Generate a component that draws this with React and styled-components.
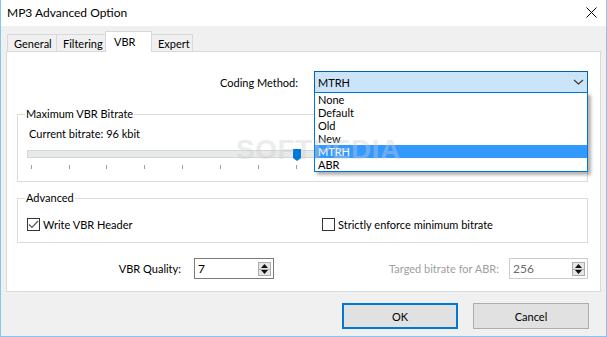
import styled, { createGlobalStyle } from "styled-components"

const GlobalStyle = createGlobalStyle`
  html, body {
    margin: 0;
    padding: 0;
    background: #ffffff;
  }
  * {
    box-sizing: border-box;
  }
`

const Window = styled.div`
  position: relative;
  width: 607px;
  height: 337px;
  display: flex;
  flex-direction: column;
  border: 1px solid #88c4f2;
  border-top: none;
  font-family: "Lato", "Liberation Sans", sans-serif;
  font-size: 11px;
  color: #000;
  overflow: hidden;
`

const TitleBar = styled.div`
  height: 26px;
  flex: none;
  display: flex;
  align-items: center;
  justify-content: space-between;
  padding: 0 9px 1px 6px;
  background: #fff;
`

const Title = styled.span`
  font-size: 12px;
  color: #000;
`

const Body = styled.div`
  flex: 1;
  display: flex;
  flex-direction: column;
  background: #f0f0f0;
  padding: 5px 5px 8px 5px;
`

const TabRow = styled.div`
  display: flex;
  align-items: flex-end;
  padding-left: 1px;
  margin-bottom: -1px;
  height: 21px;
`

const Tab = styled.div`
  position: relative;
  margin-left: -1px;
  width: ${p => p.$w}px;
  display: flex;
  align-items: center;
  border: 1px solid #d9d9d9;
  border-bottom: none;
  background: ${p => (p.$active ? "#fff" : "#f0f0f0")};
  height: ${p => (p.$active ? "21px" : "17px")};
  margin-bottom: ${p => (p.$active ? "0" : "1px")};
  padding: ${p => (p.$active ? "0 0 2px 8px" : "0 0 0 6px")};
  z-index: ${p => (p.$active ? 2 : 1)};
  &:first-child {
    margin-left: 0;
  }
`

const Panel = styled.div`
  position: relative;
  display: flex;
  flex-direction: column;
  background: #fff;
  border: 1px solid #d9d9d9;
  padding: 19px 12px 12px 10px;
`

const CodingRow = styled.div`
  display: flex;
  justify-content: flex-end;
  align-items: center;
  gap: 16px;
`

const Combo = styled.div`
  position: relative;
  width: 274px;
  height: 22px;
  display: flex;
  align-items: center;
  justify-content: space-between;
  padding: 0 3px 0 3px;
  background: #cce4f7;
  border: 1px solid #0063b1;
`

const DropList = styled.div`
  position: absolute;
  left: -1px;
  top: 20px;
  width: 274px;
  background: #fff;
  border: 1px solid #0078d7;
  box-shadow: 3px 3px 3px rgba(0, 0, 0, 0.3);
  z-index: 10;
`

const Option = styled.div`
  height: 13px;
  line-height: 13px;
  padding-left: 3px;
  background: ${p => (p.$selected ? "#3399ff" : "transparent")};
  color: ${p => (p.$selected ? "#fff" : "#000")};
`

const Group = styled.fieldset`
  margin: ${p => p.$mt}px 0 0;
  padding: ${p => p.$pad};
  border: 1px solid #dcdcdc;
  min-width: 0;
`

const Legend = styled.legend`
  margin-left: -2px;
  padding: 0 1px;
  line-height: 16px;
  height: 16px;
`

const BitrateText = styled.div`
  width: fit-content;
  padding-left: 2px;
  line-height: 16px;
`

const Slider = styled.div`
  position: relative;
  margin-top: 7px;
  height: 20px;
`

const Track = styled.div`
  position: absolute;
  left: 0;
  top: 1px;
  width: 539px;
  height: 8px;
  background: #e7eaea;
  border: 1px solid #d6d6d6;
`

const Tick = styled.div`
  position: absolute;
  top: 16px;
  width: 1px;
  height: 4px;
  background: #a0a0a0;
`

const Thumb = styled.svg`
  position: absolute;
  top: 0;
  left: 266px;
`

const CheckGrid = styled.div`
  display: grid;
  grid-template-columns: 295px 1fr;
  height: 16px;
  align-items: center;
`

const CheckLabel = styled.label`
  display: flex;
  align-items: center;
  gap: 3px;
  width: fit-content;
`

const Box = styled.span`
  width: 13px;
  height: 13px;
  border: 1px solid #333;
  background: #fff;
  display: flex;
  align-items: center;
  justify-content: center;
`

const SpinRow = styled.div`
  display: grid;
  grid-template-columns: 257px 1fr;
  margin-top: 15px;
`

const Field = styled.div`
  display: flex;
  justify-content: flex-end;
  align-items: center;
  gap: ${p => p.$gap}px;
  color: ${p => (p.$disabled ? "#a0a0a0" : "#000")};
`

const SpinBox = styled.div`
  width: ${p => p.$w}px;
  height: 21px;
  display: flex;
  align-items: center;
  justify-content: space-between;
  padding: 0 2px 0 3px;
  border: 1px solid ${p => (p.$disabled ? "#cccccc" : "#7a7a7a")};
  background: #fff;
  color: ${p => (p.$disabled ? "#6d6d6d" : "#000")};
  font-size: 12px;
`

const Arrows = styled.div`
  display: flex;
  flex-direction: column;
`

const ArrowBtn = styled.div`
  width: 13px;
  height: 7px;
  border: 1px solid #adadad;
  background: #e5e5e5;
  display: flex;
  align-items: center;
  justify-content: center;
  &:first-child {
    border-bottom: none;
  }
`

const ButtonRow = styled.div`
  display: flex;
  justify-content: flex-end;
  gap: 15px;
  margin-top: 11px;
  padding-right: 12px;
`

const Button = styled.div`
  width: 116px;
  height: 26px;
  display: flex;
  align-items: center;
  justify-content: center;
  background: #e1e1e1;
  border: ${p => (p.$default ? "2px solid #0078d7" : "1px solid #adadad")};
`

const Watermark = styled.div`
  position: absolute;
  left: 229px;
  top: 82px;
  font-family: "Liberation Sans", sans-serif;
  font-weight: bold;
  font-size: 28px;
  letter-spacing: 0.5px;
  color: rgba(205, 205, 205, 0.4);
  pointer-events: none;
  z-index: 20;
`

const options = ["None", "Default", "Old", "New", "MTRH", "ABR"]

function Spin({ value, width, disabled }) {
  return (
    <SpinBox $w={width} $disabled={disabled}>
      <span>{value}</span>
      <Arrows>
        <ArrowBtn>
          <svg width="7" height="4" viewBox="0 0 7 4"><path d="M0 4 L3.5 0 L7 4 Z" fill="#111" /></svg>
        </ArrowBtn>
        <ArrowBtn>
          <svg width="7" height="4" viewBox="0 0 7 4"><path d="M0 0 L3.5 4 L7 0 Z" fill="#111" /></svg>
        </ArrowBtn>
      </Arrows>
    </SpinBox>
  )
}

function Check({ checked, children }) {
  return (
    <CheckLabel>
      <Box>
        {checked && (
          <svg width="11" height="9" viewBox="0 0 11 9">
            <path d="M1 4.5 L4 7.5 L10 1" fill="none" stroke="#555" strokeWidth="1.2" />
          </svg>
        )}
      </Box>
      {children}
    </CheckLabel>
  )
}

export default function App() {
  const ticks = Array.from({ length: 15 }, (_, i) => 3.6 + i * 37.9)

  return (
    <Window>
      <GlobalStyle />
      <TitleBar>
        <Title>MP3 Advanced Option</Title>
        <svg width="11" height="11" viewBox="0 0 11 11">
          <path d="M0.5 0.5 L10.5 10.5 M10.5 0.5 L0.5 10.5" stroke="#000" strokeWidth="1" />
        </svg>
      </TitleBar>
      <Body>
        <TabRow>
          <Tab $w={50}>General</Tab>
          <Tab $w={50}>Filtering</Tab>
          <Tab $w={47} $active>VBR</Tab>
          <Tab $w={42}>Expert</Tab>
        </TabRow>
        <Panel>
          <CodingRow>
            <span>Coding Method:</span>
            <Combo>
              <span>MTRH</span>
              <svg width="11" height="6" viewBox="0 0 11 6">
                <path d="M1 1 L5.5 5 L10 1" fill="none" stroke="#333" strokeWidth="1.1" />
              </svg>
              <DropList>
                {options.map(o => (
                  <Option key={o} $selected={o === "MTRH"}>{o}</Option>
                ))}
              </DropList>
            </Combo>
          </CodingRow>

          <Group $mt={13} $pad="4px 10px 12px 9px">
            <Legend>Maximum VBR Bitrate</Legend>
            <BitrateText>Current bitrate: 96 kbit</BitrateText>
            <Slider>
              <Track />
              {ticks.map((x, i) => (
                <Tick key={i} style={{ left: Math.round(x) }} />
              ))}
              <Thumb width="8" height="12" viewBox="0 0 8 12">
                <path d="M0 0 H8 V9 L4 12 L0 9 Z" fill="#0078d7" />
              </Thumb>
            </Slider>
          </Group>

          <Group $mt={8} $pad="10px 10px 10px 9px">
            <Legend>Advanced</Legend>
            <CheckGrid>
              <Check checked>Write VBR Header</Check>
              <Check>Strictly enforce minimum bitrate</Check>
            </CheckGrid>
          </Group>

          <SpinRow>
            <Field $gap={13}>
              <span>VBR Quality:</span>
              <Spin value="7" width={80} />
            </Field>
            <Field $gap={10} $disabled>
              <span>Targed bitrate for ABR:</span>
              <Spin value="256" width={79} disabled />
            </Field>
          </SpinRow>
          <Watermark>SOFTPEDIA</Watermark>
        </Panel>
        <ButtonRow>
          <Button $default>OK</Button>
          <Button>Cancel</Button>
        </ButtonRow>
      </Body>
    </Window>
  )
}
